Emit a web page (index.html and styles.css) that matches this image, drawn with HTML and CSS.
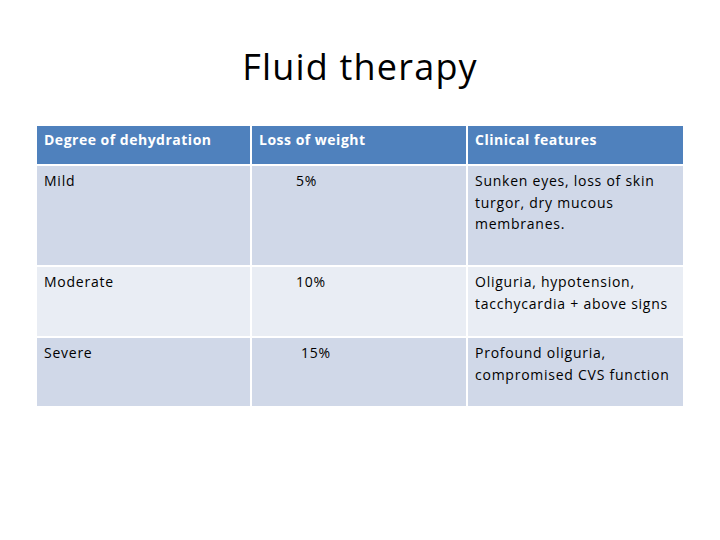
FILE: index.html
```html
<!DOCTYPE html>
<html>
<head>
<meta charset="utf-8">
<link rel="stylesheet" href="styles.css">
</head>
<body>
<div class="slide">
  <h1 class="title">Fluid therapy</h1>
  <table class="grid">
    <colgroup><col class="c1"><col class="c2"><col class="c3"></colgroup>
    <thead>
      <tr class="head"><th>Degree of dehydration</th><th>Loss of weight</th><th>Clinical features</th></tr>
    </thead>
    <tbody>
      <tr class="odd r1"><td>Mild</td><td><span class="ind">5%</span></td><td>Sunken eyes, loss of skin turgor, dry mucous membranes.</td></tr>
      <tr class="even r2"><td>Moderate</td><td><span class="ind">10%</span></td><td>Oliguria, hypotension, tacchycardia + above signs</td></tr>
      <tr class="odd r3"><td>Severe</td><td><span class="ind ind2">15%</span></td><td>Profound oliguria, compromised CVS function</td></tr>
    </tbody>
  </table>
</div>
</body>
</html>
```
FILE: styles.css
```css
html, body {
  margin: 0;
  padding: 0;
  background: #ffffff;
}
.slide {
  width: 720px;
  height: 540px;
  font-family: "Open Sans", Lato, "Liberation Sans", sans-serif;
  color: #000;
}
.title {
  margin: 0;
  padding-top: 43px;
  font-weight: normal;
  font-size: 36px;
  line-height: 48px;
  letter-spacing: 1.2px;
  text-align: center;
}
.grid {
  margin-left: 35px;
  margin-top: 33px;
  border-collapse: separate;
  border-spacing: 2px;
  table-layout: fixed;
  width: 650px;
}
.c1 { width: 213px; }
.c2 { width: 214px; }
.c3 { width: 215px; }
.grid th, .grid td {
  padding: 0 2px 0 7px;
  vertical-align: top;
  text-align: left;
  font-size: 14px;
  line-height: 21.5px;
  letter-spacing: 0.75px;
  box-sizing: border-box;
}
.grid th {
  background: #4f81bd;
  color: #fff;
  font-weight: bold;
  letter-spacing: 0.5px;
  height: 38px;
  padding-top: 3px;
}
.grid td { padding-top: 4px; }
.odd td { background: #d0d8e8; }
.even td { background: #e9edf4; }
.r1 td { height: 99px; }
.r2 td { height: 69px; }
.r3 td { height: 68px; }
.ind { padding-left: 37px; }
.ind2 { padding-left: 42px; }
```
